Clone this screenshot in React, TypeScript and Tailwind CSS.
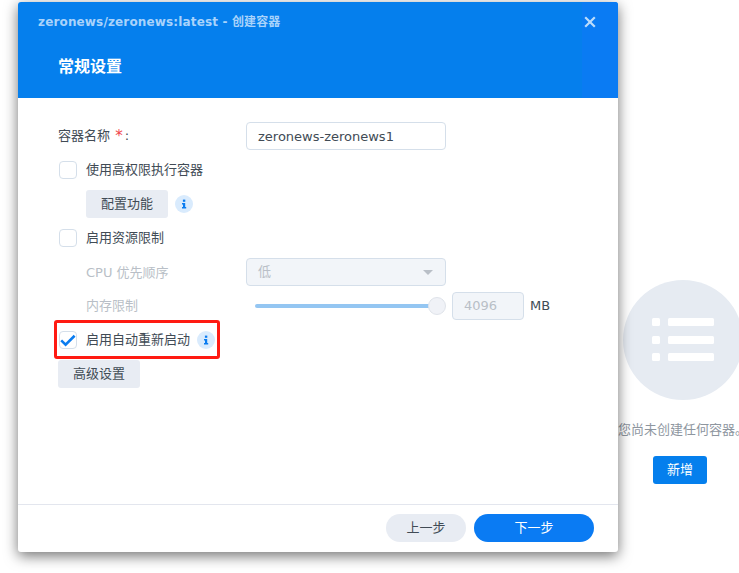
import { ReactNode } from "react";

const font = "font-['DejaVu_Sans','Noto_Sans_CJK_SC',sans-serif]";

function InfoIcon() {
  return (
    <svg viewBox="0 0 18 18" className="w-[18px] h-[18px] shrink-0">
      <circle cx="9" cy="9" r="9" fill="#d9ebfd" />
      <rect x="7.9" y="4.6" width="2.4" height="2.2" fill="#0a7cf0" />
      <path d="M7 8h3.2v4H11.2v1.4H7V12h1v-2.6H7z" fill="#0a7cf0" />
    </svg>
  );
}

function Checkbox({ checked }: { checked?: boolean }) {
  return (
    <span className="w-[18px] h-[18px] shrink-0 rounded-[4px] border border-[#d5dfea] bg-white relative block">
      {checked && (
        <svg viewBox="0 0 18 18" className="absolute left-[-1px] top-[-1px] w-[18px] h-[18px]">
          <path d="M2.2 9.4 6.6 13.6 15.6 4.8" fill="none" stroke="#0a7cf0" strokeWidth="2.6" />
        </svg>
      )}
    </span>
  );
}

function Row({ children }: { children: ReactNode }) {
  return <div className="h-7 flex items-center shrink-0">{children}</div>;
}

function GrayButton({ children }: { children: ReactNode }) {
  return (
    <button className="h-7 w-[82px] rounded-[3px] bg-[#e8ecf3] text-[13px] text-[#414b55]">{children}</button>
  );
}

export default function App() {
  return (
    <div className={`${font} relative w-[739px] h-[573px] overflow-hidden bg-white text-[13px] text-[#414b55]`}>
      {/* empty state behind the dialog */}
      <div className="pt-[280px] pl-[618px] w-[760px] flex flex-col items-start">
        <div className="ml-[5px] w-[120px] h-[120px] rounded-full bg-[#e6ebf2] flex items-center justify-center">
          <svg viewBox="0 0 120 120" className="w-[120px] h-[120px]">
            <g fill="#fff">
              <rect x="29" y="38" width="8" height="8" rx="1.5" />
              <rect x="45" y="38" width="46" height="8" rx="1.5" />
              <rect x="29" y="56" width="8" height="8" rx="1.5" />
              <rect x="45" y="56" width="46" height="8" rx="1.5" />
              <rect x="29" y="73" width="8" height="8" rx="1.5" />
              <rect x="45" y="73" width="46" height="8" rx="1.5" />
            </g>
          </svg>
        </div>
        <p className="mt-[21px] h-[18px] leading-[18px] whitespace-nowrap text-[#8e969f]">您尚未创建任何容器。</p>
        <button className="mt-[17px] ml-[35px] w-[54px] h-7 rounded-[3px] bg-[#057fed] text-white">新增</button>
      </div>

      {/* dialog */}
      <div className="absolute left-[18px] top-[2px] w-[600px] h-[550px] bg-white rounded-[3px] flex flex-col shadow-[0_4px_14px_rgba(0,0,0,0.55)]">
        <div className="h-[96px] shrink-0 flex bg-[#057fed] rounded-t-[3px]">
          <div className="flex-1 flex flex-col">
            <div className="pl-5 pt-[11px] h-[19px] box-content leading-[19px] text-[12px] tracking-[0.15px] font-bold text-[#a9d3fb] whitespace-nowrap">
              zeronews/zeronews:latest - 创建容器
            </div>
            <div className="pl-10 mt-[24px] text-[16px] leading-[22px] font-bold text-white">常规设置</div>
          </div>
          <div className="w-9 bg-[#0a7bf3] rounded-tr-[3px] flex justify-start pl-[2px] pt-[14px]">
            <svg viewBox="0 0 12 12" className="w-3 h-3">
              <path d="M1.2 1.2 10.8 10.8M10.8 1.2 1.2 10.8" stroke="#bcdcfb" strokeWidth="2.2" fill="none" />
            </svg>
          </div>
        </div>

        <div className="flex-1 pt-6 px-10 flex flex-col gap-1.5">
          <Row>
            <span className="w-[188px] shrink-0 whitespace-nowrap">
              容器名称 <span className="ml-px text-[15px] leading-none relative top-px text-[#f0444a]">*</span>
              <span className="ml-[2px]">:</span>
            </span>
            <input
              readOnly
              value="zeronews-zeronews1"
              className="w-[200px] h-7 px-[11px] rounded-[4px] border border-[#d5dfea] bg-white text-[13px] text-[#414b55] outline-none"
            />
          </Row>
          <Row>
            <span className="ml-px"><Checkbox /></span>
            <span className="ml-[9px]">使用高权限执行容器</span>
          </Row>
          <Row>
            <span className="ml-7"><GrayButton>配置功能</GrayButton></span>
            <span className="ml-[7px]"><InfoIcon /></span>
          </Row>
          <Row>
            <span className="ml-px"><Checkbox /></span>
            <span className="ml-[9px]">启用资源限制</span>
          </Row>
          <Row>
            <span className="ml-7 pt-px w-[160px] shrink-0 text-[#b9bfc7] whitespace-nowrap">CPU 优先顺序</span>
            <div className="w-[200px] h-7 pl-[11px] pr-[12px] rounded-[4px] border border-[#d5dfea] bg-[#f2f5f9] flex items-center justify-between text-[#b9bfc7]">
              <span>低</span>
              <span className="w-0 h-0 border-x-[5px] border-x-transparent border-t-[5px] border-t-[#b9bfc7]" />
            </div>
          </Row>
          <Row>
            <span className="ml-7 w-[169px] shrink-0 text-[#b9bfc7]">内存限制</span>
            <div className="w-[191px] flex items-center shrink-0">
              <div className="w-[175px] h-1 rounded-l-full bg-[#94c6f2]" />
              <div className="-ml-[2px] w-[18px] h-[18px] rounded-full bg-[#f0f2f7] border border-[#dfe3ea]" />
            </div>
            <div className="ml-[6px] w-[72px] h-7 pl-[11px] rounded-[4px] border border-[#d5dfea] bg-[#f2f5f9] flex items-center text-[#b9bfc7]">
              4096
            </div>
            <span className="ml-[6px]">MB</span>
          </Row>
          <Row>
            <span className="ml-px"><Checkbox checked /></span>
            <span className="ml-[9px]">启用自动重新启动</span>
            <span className="ml-[7px]"><InfoIcon /></span>
          </Row>
          <Row>
            <GrayButton>高级设置</GrayButton>
          </Row>
        </div>

        <div className="h-[48px] shrink-0 border-t border-[#e3e6ee] flex items-start justify-end pt-[9px] pr-6 gap-2">
          <button className="w-20 h-7 rounded-full bg-[#e8ecf3] text-[#414b55]">上一步</button>
          <button className="w-[120px] h-7 rounded-full bg-[#0a7bf3] text-white">下一步</button>
        </div>
      </div>

      {/* red annotation around the auto restart option */}
      <div className="absolute left-[54px] top-[320px] w-[166px] h-[39px] border-[3px] border-[#ff1a12] rounded-[3px]" />
    </div>
  );
}
